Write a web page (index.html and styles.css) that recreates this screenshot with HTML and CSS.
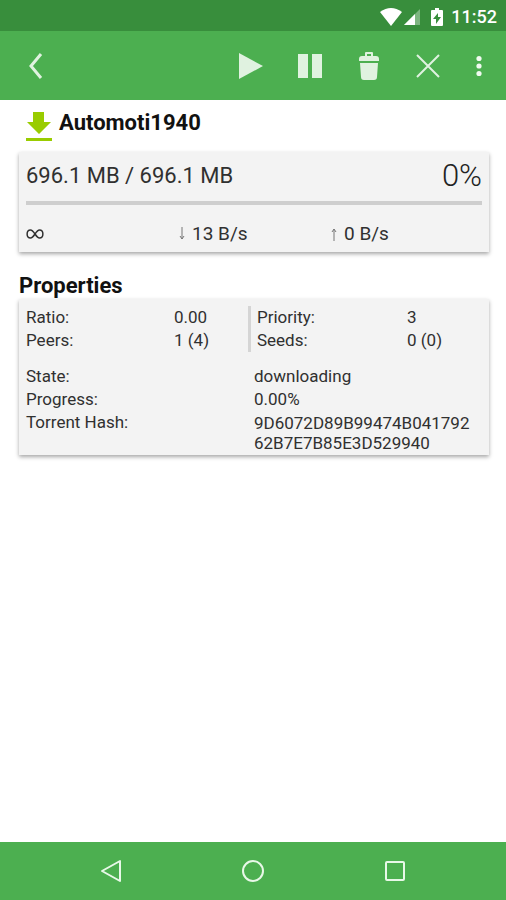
FILE: index.html
```html
<!DOCTYPE html>
<html lang="en">
<head>
<meta charset="utf-8">
<meta name="viewport" content="width=device-width, initial-scale=1">
<title>Automoti1940</title>
<link rel="stylesheet" href="styles.css">
</head>
<body>
<div class="status-bar">
  <svg class="status-wifi" width="24" height="20" viewBox="0 0 24 20" aria-hidden="true"><path d="M1 5Q12-3 23 5L12 19Z" fill="#fff"/></svg>
  <svg class="status-signal" width="18" height="18" viewBox="0 0 18 18" aria-hidden="true"><path d="M17 1V17H1Z" fill="#fff" opacity=".35"/><path d="M12 6V17H1Z" fill="#fff"/></svg>
  <svg class="status-battery" width="12" height="20" viewBox="0 0 12 20" aria-hidden="true"><path fill-rule="evenodd" d="M4 1H8V3H11Q12 3 12 4V18Q12 19 11 19H1Q0 19 0 18V4Q0 3 1 3H4ZM7 6L2 12H5V17L10 10H7Z" fill="#fff"/></svg>
  <time>11:52</time>
</div>
<header class="app-bar">
  <button class="bar-button back" aria-label="Back"><svg width="16" height="28" viewBox="0 0 16 28"><path d="M13 2L3 14L13 26" fill="none" stroke="currentColor" stroke-width="3"/></svg></button>
  <button class="bar-button" aria-label="Start"><svg width="26" height="28" viewBox="0 0 26 28"><path d="M1 1L25 14L1 27Z" fill="currentColor"/></svg></button>
  <button class="bar-button" aria-label="Pause"><svg width="26" height="26" viewBox="0 0 26 26"><path d="M1 1H11V25H1ZM15 1H25V25H15Z" fill="currentColor"/></svg></button>
  <button class="bar-button" aria-label="Delete"><svg width="20" height="30" viewBox="0 0 20 30"><path fill-rule="evenodd" d="M6 5V2Q6 1 7 1H13Q14 1 14 2V5H17Q20 5 20 8V10H0V8Q0 5 3 5ZM8 3V5H12V3Z" fill="currentColor"/><path d="M1 12H19L18 26Q18 29 15 29H5Q2 29 2 26Z" fill="currentColor"/></svg></button>
  <button class="bar-button" aria-label="Close"><svg width="24" height="24" viewBox="0 0 24 24"><path d="M1 1L23 23M23 1L1 23" fill="none" stroke="currentColor" stroke-width="2"/></svg></button>
  <button class="bar-button more" aria-label="More options"><svg width="6" height="22" viewBox="0 0 6 22"><g fill="currentColor"><circle cx="3" cy="3.500" r="2.600"/><circle cx="3" cy="11" r="2.600"/><circle cx="3" cy="18.500" r="2.600"/></g></svg></button>
</header>
<main class="content">
  <div class="torrent-title">
    <svg width="26" height="30" viewBox="0 0 26 30" aria-hidden="true"><path d="M7 0H18V10H25L13 22L1 10H7ZM0 26H26V29H0Z" fill="#99cc00"/></svg>
    <h1>Automoti1940</h1>
  </div>
  <section class="card transfer" aria-label="Transfer">
    <div class="amount"><span>696.1 MB / 696.1 MB</span><span class="percent">0%</span></div>
    <div class="progress" role="progressbar" aria-label="Progress" aria-valuenow="0"></div>
    <div class="rates">
      <span><svg width="18" height="12" viewBox="0 0 18 12" role="img" aria-label="Unlimited time remaining"><path d="M9 6C7 3 6 2 4.500 2C0 2 0 10 4.500 10C6 10 7 9 9 6C11 3 12 2 13.500 2C18 2 18 10 13.500 10C12 10 11 9 9 6Z" fill="none" stroke="#303030" stroke-width="1.500"/></svg></span>
      <span class="rate"><svg width="8" height="14" viewBox="0 0 8 14" role="img" aria-label="Download"><path d="M4 0V12M2 9L4 12L6 9" fill="none" stroke="#777"/></svg>13 B/s</span>
      <span class="rate"><svg width="8" height="14" viewBox="0 0 8 14" role="img" aria-label="Upload"><path d="M4 14V2M2 5L4 2L6 5" fill="none" stroke="#777"/></svg>0 B/s</span>
    </div>
  </section>
  <h2>Properties</h2>
  <section class="card properties" aria-label="Properties">
    <div class="stats">
      <dl><dt>Ratio:</dt><dd>0.00</dd><dt>Peers:</dt><dd>1 (4)</dd></dl>
      <dl><dt>Priority:</dt><dd>3</dd><dt>Seeds:</dt><dd>0 (0)</dd></dl>
    </div>
    <dl class="details">
      <dt>State:</dt><dd>downloading</dd>
      <dt>Progress:</dt><dd>0.00%</dd>
      <dt>Torrent Hash:</dt><dd class="hash">9D6072D89B99474B04179262B7E7B85E3D529940</dd>
    </dl>
  </section>
</main>
<nav class="nav-bar" aria-label="System">
  <button aria-label="Back"><svg width="24" height="24" viewBox="0 0 24 24"><path d="M21 2V22L3 12Z" fill="none" stroke="currentColor" stroke-width="2" stroke-linejoin="round"/></svg></button>
  <button aria-label="Home"><svg width="24" height="24" viewBox="0 0 24 24"><circle cx="12" cy="12" r="10" fill="none" stroke="currentColor" stroke-width="2"/></svg></button>
  <button aria-label="Recent apps"><svg width="24" height="24" viewBox="0 0 24 24"><rect x="3" y="3" width="18" height="18" rx="1" fill="none" stroke="currentColor" stroke-width="2"/></svg></button>
</nav>
</body>
</html>
```
FILE: styles.css
```css
* { box-sizing: border-box; }

body {
  display: flex;
  flex-direction: column;
  min-height: 100vh;
  margin: 0;
  background: #fff;
  color: #303030;
  font: 17px/23px Roboto, sans-serif;
}

svg { display: block; flex: none; }

h1, h2, dl, dd { margin: 0; }

button {
  display: flex;
  align-items: center;
  justify-content: center;
  padding: 0;
  border: 0;
  background: none;
  color: #e0f2e0;
}

.status-bar {
  display: flex;
  align-items: center;
  justify-content: flex-end;
  height: 31px;
  padding: 2px 9px 0 0;
  background: #388e3c;
  color: #fff;
  font-size: 18px;
  font-weight: 500;
}

.status-signal { margin-right: 10px; }
.status-battery { margin-right: 8px; }

.app-bar {
  display: flex;
  height: 69px;
  padding: 0 5px 0 6px;
  background: #4caf50;
}

.bar-button { width: 59px; }
.bar-button.back { margin-right: auto; }
.bar-button.more { width: 44px; color: #f0faf0; }

.content {
  flex: 1;
  padding: 10px 17px 0 19px;
}

.torrent-title {
  display: flex;
  align-items: center;
  gap: 7px;
  height: 32px;
  padding-left: 7px;
}

.torrent-title svg { margin-top: 2px; }

h1, h2 {
  color: #111;
  font-size: 22px;
  font-weight: 700;
  line-height: 26px;
}

h1 { padding-bottom: 6px; }

.card {
  padding: 7px;
  background: #f3f3f3;
  box-shadow: 0 2px 4px rgba(0, 0, 0, .35);
}

.transfer { margin: 10px 0 21px; }

.amount {
  display: flex;
  align-items: center;
  justify-content: space-between;
  height: 32px;
  font-size: 22px;
}

.percent {
  color: #222;
  font-size: 31px;
  font-weight: 300;
}

.progress {
  height: 4px;
  margin: 10px 0 17px;
  background: #cecece;
}

.rates {
  display: grid;
  grid-template-columns: repeat(3, 1fr);
  align-items: center;
  font-size: 19px;
}

.rate {
  display: flex;
  align-items: center;
  gap: 6px;
}

.properties { padding-bottom: 2px; }

.stats {
  display: grid;
  grid-template-columns: 1fr 1fr;
}

.stats dl {
  display: grid;
  grid-template-columns: 2fr 1fr;
  margin-right: 6px;
}

.stats dl + dl {
  margin: 0 0 0 -6px;
  padding-left: 6px;
  border-left: 3px solid #d5d5d5;
}

.details {
  display: grid;
  grid-template-columns: 1fr 1fr;
  margin-top: 13px;
}

.hash {
  line-height: 20px;
  padding: 2px 6px 0 0;
  overflow-wrap: anywhere;
}

.nav-bar {
  display: flex;
  justify-content: center;
  height: 58px;
  background: #4caf50;
}

.nav-bar button { width: 142px; color: #e8f8e8; }
```
